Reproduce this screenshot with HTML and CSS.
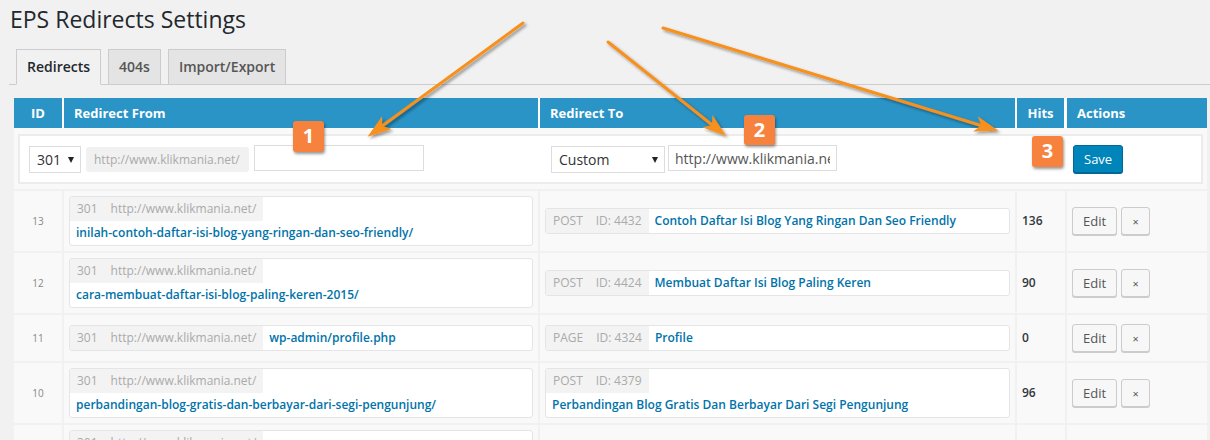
FILE: index.html
```html
<!DOCTYPE html>
<html lang="en">
<head>
    <meta charset="UTF-8">
    <title>EPS Redirects Settings</title>
    <link rel="stylesheet" href="styles.css">
</head>
<body>
    <div class="wrap">
        <h1 class="page-title">EPS Redirects Settings</h1>

        <!-- Tabs -->
        <nav class="tabs">
            <a class="tab tab-active">Redirects</a>
            <a class="tab">404s</a>
            <a class="tab">Import/Export</a>
        </nav>

        <!-- Redirects table -->
        <table class="redirects">
            <thead>
                <tr>
                    <th class="col-id">ID</th>
                    <th class="col-from">Redirect From</th>
                    <th class="col-to">Redirect To</th>
                    <th class="col-hits">Hits</th>
                    <th class="col-actions">Actions</th>
                </tr>
            </thead>
            <tbody>
                <tr class="new-row">
                    <td colspan="5">
                        <div class="new-box">
                            <div class="new-from">
                                <div class="select select-code">301<span class="caret"></span></div>
                                <span class="prefix">http://www.klikmania.net/</span>
                                <input class="field field-from" type="text">
                            </div>
                            <div class="new-to">
                                <div class="select select-type">Custom<span class="caret"></span></div>
                                <input class="field field-to" type="text" value="http://www.klikmania.net/">
                            </div>
                            <div class="new-hits"></div>
                            <div class="new-actions">
                                <button class="btn-primary">Save</button>
                            </div>
                        </div>
                    </td>
                </tr>

                <tr>
                    <td class="cell-id">13</td>
                    <td><div class="url-box"><span class="url-base"><span class="code">301</span>http://www.klikmania.net/</span><a class="url-link">inilah-contoh-daftar-isi-blog-yang-ringan-dan-seo-friendly/</a></div></td>
                    <td><div class="url-box"><span class="url-base"><span class="code">POST</span>ID: 4432</span><a class="url-link">Contoh Daftar Isi Blog Yang Ringan Dan Seo Friendly</a></div></td>
                    <td class="cell-hits">136</td>
                    <td class="cell-actions"><button class="btn">Edit</button><button class="btn btn-x">&times;</button></td>
                </tr>
                <tr>
                    <td class="cell-id">12</td>
                    <td><div class="url-box"><span class="url-base"><span class="code">301</span>http://www.klikmania.net/</span><a class="url-link">cara-membuat-daftar-isi-blog-paling-keren-2015/</a></div></td>
                    <td><div class="url-box"><span class="url-base"><span class="code">POST</span>ID: 4424</span><a class="url-link">Membuat Daftar Isi Blog Paling Keren</a></div></td>
                    <td class="cell-hits">90</td>
                    <td class="cell-actions"><button class="btn">Edit</button><button class="btn btn-x">&times;</button></td>
                </tr>
                <tr>
                    <td class="cell-id">11</td>
                    <td><div class="url-box"><span class="url-base"><span class="code">301</span>http://www.klikmania.net/</span><a class="url-link">wp-admin/profile.php</a></div></td>
                    <td><div class="url-box"><span class="url-base"><span class="code">PAGE</span>ID: 4324</span><a class="url-link">Profile</a></div></td>
                    <td class="cell-hits">0</td>
                    <td class="cell-actions"><button class="btn">Edit</button><button class="btn btn-x">&times;</button></td>
                </tr>
                <tr>
                    <td class="cell-id">10</td>
                    <td><div class="url-box"><span class="url-base"><span class="code">301</span>http://www.klikmania.net/</span><a class="url-link">perbandingan-blog-gratis-dan-berbayar-dari-segi-pengunjung/</a></div></td>
                    <td><div class="url-box"><span class="url-base"><span class="code">POST</span>ID: 4379</span><a class="url-link">Perbandingan Blog Gratis Dan Berbayar Dari Segi Pengunjung</a></div></td>
                    <td class="cell-hits">96</td>
                    <td class="cell-actions"><button class="btn">Edit</button><button class="btn btn-x">&times;</button></td>
                </tr>
                <!-- next row, only its top edge is in view -->
                <tr class="row-partial">
                    <td class="cell-id"></td>
                    <td><div class="url-box"><span class="url-base"><span class="code">301</span>http://www.klikmania.net/</span></div></td>
                    <td></td>
                    <td class="cell-hits"></td>
                    <td class="cell-actions"></td>
                </tr>
            </tbody>
        </table>
    </div>

    <!-- Annotation arrows drawn over the screenshot -->
    <svg class="arrows" width="1210" height="440" viewBox="0 0 1210 440">
        <defs>
            <filter id="shadow" x="-20%" y="-20%" width="140%" height="140%">
                <feDropShadow dx="2" dy="2" stdDeviation="1.5" flood-color="#000" flood-opacity="0.4"/>
            </filter>
            <marker id="head" markerUnits="userSpaceOnUse" viewBox="0 0 24 16" markerWidth="24" markerHeight="16" refX="11" refY="8" orient="auto">
                <path d="M0,0 L24,8 L0,16 L6,8 z" fill="#f7901e"/>
            </marker>
        </defs>
        <g filter="url(#shadow)" stroke="#f7901e" stroke-width="3" stroke-linecap="round" fill="none">
            <line x1="523" y1="23" x2="378" y2="129" marker-end="url(#head)"/>
            <line x1="608" y1="42" x2="716" y2="128" marker-end="url(#head)"/>
            <line x1="663" y1="28" x2="986" y2="127" marker-end="url(#head)"/>
        </g>
    </svg>
    <div class="badge badge-1">1</div>
    <div class="badge badge-2">2</div>
    <div class="badge badge-3">3</div>
</body>
</html>
```

FILE: styles.css
```css
/* Base */
* {
    margin: 0;
    padding: 0;
    box-sizing: border-box;
}

body {
    position: relative;
    width: 1210px;
    height: 440px;
    overflow: hidden;
    background-color: #f1f1f1;
    color: #444;
    font-family: "Open Sans", "Liberation Sans", sans-serif;
    font-size: 13px;
    line-height: 1.4;
}

.wrap {
    padding-left: 9px;
}

/* Title */
.page-title {
    padding-top: 5px;
    padding-left: 1px;
    font-size: 23px;
    font-weight: 400;
    line-height: 29px;
    color: #23282d;
}

/* Tabs */
.tabs {
    display: flex;
    align-items: flex-end;
    margin-top: 15px;
    border-bottom: 1px solid #ccc;
    height: 36px;
}

.tab {
    margin-left: 7px;
    margin-bottom: -1px;
    padding: 5px 10px;
    font-size: 14px;
    font-weight: 600;
    line-height: 24px;
    color: #555;
    background-color: #e4e4e4;
    border: 1px solid #ccc;
}

.tab-active {
    color: #23282d;
    background-color: #f1f1f1;
    border-bottom-color: #f1f1f1;
}

/* Table */
.redirects {
    margin-top: 13px;
    margin-left: 5px;
    width: 1193px;
    table-layout: fixed;
    border-collapse: separate;
    border-spacing: 0;
}

.redirects th {
    height: 30px;
    padding: 0 10px;
    background-color: #2a94c7;
    color: #fff;
    font-size: 13px;
    font-weight: 700;
    text-align: left;
    border-right: 2px solid #fff;
}

.redirects th:last-child {
    border-right: none;
}

.col-id { width: 50px; }
.col-from { width: 476px; }
.col-to { width: 477px; }
.col-hits { width: 50px; }

.redirects th.col-id,
.redirects th.col-hits {
    text-align: center;
    padding: 0;
}

.redirects th.col-hits {
    border-right-width: 3px;
}

.redirects td {
    padding: 5px;
    background-color: #f9f9f9;
    border-right: 2px solid #f1f1f1;
    border-bottom: 2px solid #f1f1f1;
    vertical-align: middle;
}

.redirects td:last-child {
    border-right: none;
}

.redirects .row-partial td {
    height: 60px;
    vertical-align: top;
}

.cell-id {
    text-align: center;
    font-size: 10px;
    color: #888;
}

.cell-hits {
    font-size: 12px;
    font-weight: 600;
    color: #32373c;
}

/* New redirect row */
.redirects .new-row td {
    padding: 6px 4px 5px;
    background-color: #f9f9f9;
}

.new-box {
    display: grid;
    grid-template-columns: 520px 477px 50px 1fr;
    align-items: center;
    height: 50px;
    background-color: #fff;
    border: 2px solid #ececec;
}

.new-from,
.new-to {
    display: flex;
    align-items: center;
}

.new-from {
    padding-left: 9px;
    gap: 5px;
}

.new-to {
    padding-left: 11px;
    gap: 3px;
}

.new-actions {
    padding-left: 6px;
}

.select {
    position: relative;
    height: 27px;
    padding-left: 7px;
    font-size: 14px;
    line-height: 25px;
    color: #333;
    background-color: #fff;
    border: 1px solid #ddd;
}

.select-code { width: 52px; }
.select-type { width: 114px; }

.caret {
    position: absolute;
    right: 6px;
    top: 10px;
    border-left: 3px solid transparent;
    border-right: 3px solid transparent;
    border-top: 6px solid #222;
}

.prefix {
    height: 25px;
    padding: 0 9px 0 8px;
    font-size: 12px;
    line-height: 25px;
    color: #aaa;
    background-color: #f1f1f1;
    border-radius: 3px;
}

.field {
    height: 26px;
    padding: 0 6px;
    font-family: inherit;
    font-size: 14px;
    color: #555;
    background-color: #fff;
    border: 1px solid #ddd;
    outline: none;
}

.field-from {
    width: 170px;
    margin-top: -3px;
}

.field-to {
    width: 169px;
    margin-top: -2px;
}

.btn-primary {
    height: 28px;
    padding: 0 10px;
    font-family: inherit;
    font-size: 13px;
    color: #fff;
    background-color: #0085ba;
    border: 1px solid #006799;
    border-radius: 3px;
    box-shadow: 0 1px 0 #006799;
}

/* URL boxes */
.url-box {
    background-color: #fff;
    border: 1px solid #e5e5e5;
    border-radius: 3px;
    font-size: 12px;
    line-height: 24px;
    overflow: hidden;
}

.url-base {
    display: inline-block;
    padding: 0 7px;
    color: #aaa;
    background-color: #f3f3f3;
    vertical-align: top;
}

.url-base .code {
    margin-right: 13px;
}

.url-link {
    display: inline-block;
    padding: 0 6px;
    color: #0073aa;
    font-weight: 600;
    vertical-align: top;
}

/* Action buttons */
.cell-actions {
    white-space: nowrap;
}

.btn {
    height: 28px;
    margin: 4px 4px 4px 0;
    padding: 0 10px;
    font-family: inherit;
    font-size: 13px;
    color: #555;
    background-color: #f7f7f7;
    border: 1px solid #ccc;
    border-radius: 3px;
    box-shadow: 0 1px 0 #ccc;
    vertical-align: middle;
}

.btn-x {
    width: 29px;
    padding: 0;
    font-size: 11px;
}

/* Annotations */
.arrows {
    position: absolute;
    top: 0;
    left: 0;
    pointer-events: none;
}

.badge {
    position: absolute;
    width: 31px;
    height: 31px;
    font-size: 20px;
    font-weight: 700;
    line-height: 30px;
    text-align: center;
    color: #fff;
    background-color: #f6823d;
    border-radius: 3px;
    box-shadow: 1px 2px 3px rgba(0, 0, 0, 0.4);
}

.badge-1 { left: 293px; top: 121px; }
.badge-2 { left: 744px; top: 115px; height: 30px; }
.badge-3 { left: 1032px; top: 136px; }
```
